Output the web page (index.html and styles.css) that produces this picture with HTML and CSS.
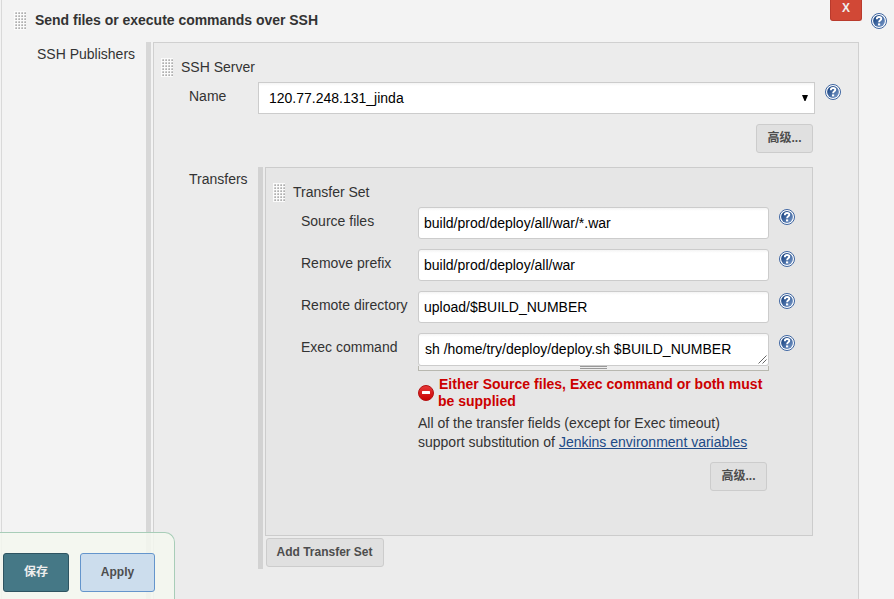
FILE: index.html
```
<!DOCTYPE html>
<html lang="zh-CN">
<head>
<meta charset="utf-8">
<title>SSH Publishers</title>
<link rel="stylesheet" href="styles.css">
</head>
<body>
<svg class="defs" width="0" height="0" aria-hidden="true">
  <defs>
    <linearGradient id="blue" x1="0" y1="0" x2="1" y2="1"><stop offset=".2" stop-color="#204a87"/><stop offset="1" stop-color="#7f9fce"/></linearGradient>
    <linearGradient id="red" x1="0" y1="0" x2="0" y2="1"><stop offset="0" stop-color="#e83a3a"/><stop offset="1" stop-color="#c80000"/></linearGradient>
    <pattern id="dots" width="3" height="3" patternUnits="userSpaceOnUse" x="0" y="1"><rect width="3" height="3" fill="#fbfbfb"/><rect x="1" width="1" height="1" fill="#d6d6d6"/><rect x="2" width="1" height="1" fill="#c4c4c4"/><rect x="1" y="1" width="1" height="1" fill="#c4c4c4"/><rect x="2" y="1" width="1" height="1" fill="#b0b0b0"/></pattern>
    <symbol id="grip" viewBox="0 0 12 19"><rect width="12" height="19" fill="url(#dots)"/></symbol>
    <symbol id="help" viewBox="0 0 16 16">
      <circle cx="8" cy="8" r="7.5" fill="#fff" stroke="#3c64a0"/>
      <circle cx="8" cy="8" r="5.9" fill="url(#blue)"/>
      <path d="M5.8 6.2C5.8 4.6 6.8 4 8.1 4c1.4 0 2.2.7 2.2 1.8 0 1.6-2.2 1.5-2.2 3.5" fill="none" stroke="#fff" stroke-width="1.9"/>
      <rect x="7" y="10.4" width="2.2" height="2" fill="#fff"/>
    </symbol>
  </defs>
</svg>
<main class="page">
  <header class="heading">
    <svg class="grip"><use href="#grip"/></svg>
    <h1 class="title">Send files or execute commands over SSH</h1>
    <button class="delete">X</button>
    <svg class="help"><use href="#help"/></svg>
  </header>
  <div class="publishers">
    <div class="label outer-label">SSH Publishers</div>
    <section class="server">
      <div class="set-title"><svg class="grip"><use href="#grip"/></svg><span class="server-name">SSH Server</span></div>
      <div class="row name-row">
        <div class="label"><span>Name</span></div>
        <div class="select"><span class="ip">120.77.248.131_jinda</span><svg class="arrow" viewBox="0 0 6 6"><path d="M0 0h6L3.5 6h-1z"/></svg></div>
        <svg class="help"><use href="#help"/></svg>
      </div>
      <div class="actions"><button class="btn advanced">高级...</button></div>
      <div class="row transfers-row">
        <div class="label"><span>Transfers</span></div>
        <div class="transfers">
          <section class="transfer-set">
            <div class="set-title"><svg class="grip"><use href="#grip"/></svg><span class="ts-name">Transfer Set</span></div>
            <div class="field"><div class="label"><span>Source files</span></div><div class="input"><span>build/prod/deploy/all/war/*.war</span></div><svg class="help"><use href="#help"/></svg></div>
            <div class="field"><div class="label"><span>Remove prefix</span></div><div class="input"><span>build/prod/deploy/all/war</span></div><svg class="help"><use href="#help"/></svg></div>
            <div class="field"><div class="label"><span>Remote directory</span></div><div class="input"><span>upload/$BUILD_NUMBER</span></div><svg class="help"><use href="#help"/></svg></div>
            <div class="field command"><div class="label"><span>Exec command</span></div>
              <div class="command-box">
                <div class="input area"><span>sh /home/try/deploy/deploy.sh $BUILD_NUMBER</span><svg class="resizer" viewBox="0 0 9 9"><path d="M.5 8.5l8-8M4.5 8.5l4-4" stroke="#666" fill="none"/></svg></div>
                <div class="handle"><i></i></div>
              </div><svg class="help"><use href="#help"/></svg></div>
            <div class="notes">
              <div class="error"><svg class="error-icon" viewBox="0 0 16 16"><circle cx="8" cy="8" r="7.5" fill="url(#red)" stroke="#b41212"/><rect x="4" y="6" width="8" height="3" rx=".5" fill="#fff"/></svg><strong>Either Source files, Exec command or both must<br>be supplied</strong></div>
              <p class="hint">All of the transfer fields (except for Exec timeout)<br>support substitution of <a href="#">Jenkins environment variables</a></p>
              <button class="btn advanced">高级...</button>
            </div>
          </section>
          <button class="btn add">Add Transfer Set</button>
        </div>
      </div>
    </section>
  </div>
  <footer class="bottom-bar"><button class="save">保存</button><button class="apply">Apply</button></footer>
</main>
</body>
</html>
```
FILE: styles.css
```
* { box-sizing: border-box; }
body { margin: 0; font: 14px/18px "Liberation Sans", "Noto Sans CJK SC", sans-serif; color: #333; background: #f3f3f3; }
svg { display: block; flex: none; }
button { font: bold 12px/16px "Liberation Sans", "Noto Sans CJK SC", sans-serif; margin: 0; padding: 0; }
.defs { position: absolute; }
.page { width: 894px; height: 599px; overflow: hidden; background: linear-gradient(#d9d9d9, #d9d9d9) 1px 0 / 1px 100% no-repeat #f3f3f3; }
.heading { display: flex; align-items: flex-start; height: 42px; padding-left: 14px; }
.heading .grip { margin-top: 11px; }
.grip { width: 12px; height: 19px; }
.title { margin: 11px 0 0 9px; font-size: 14px; line-height: 18px; width: 795px; white-space: nowrap; letter-spacing: -.025px; }
.delete { width: 32px; height: 21px; flex: none; padding-bottom: 4px; border: 1px solid #b93a2c; border-top: 0; border-radius: 0 0 3px 3px; background: #d14836; color: #eee; }
.help { width: 16px; height: 16px; }
.heading .help { margin: 13px 0 0 9px; }
.publishers { display: flex; height: 557px; }
.outer-label { width: 146px; padding: 3px 0 0 37px; white-space: nowrap; }
.server { width: 713px; border-left: 5px solid #d7d7d7; padding-left: 2px; background: linear-gradient(#ececec, #ececec) 2px 0 no-repeat; position: relative; }
.server::before { content: ""; position: absolute; inset: 0 0 0 2px; border: 1px solid #d0d0d0; border-bottom: 0; pointer-events: none; }
.set-title { display: flex; gap: 8px; padding: 16px 0 0 8px; height: 40px; }
.set-title span { line-height: 18px; }
.name-row { display: flex; height: 42px; }
.label { flex: none; }
.row > .label { width: 105px; padding: 3px 0 0 36px; }
.name-row > .label { padding-top: 5px; }
.select { display: flex; align-items: center; justify-content: space-between; width: 557px; height: 32px; border: 1px solid #ccc; background: linear-gradient(#f4f4f4, #fff 3px); color: #000; padding: 0 6px 0 10px; }
.arrow { width: 6px; height: 6px; }
.name-row .help { margin: 2px 0 0 10px; }
.btn { display: block; height: 29px; border: 1px solid #ccc; border-radius: 3px; background: #e0e0e0; color: #4d4d4d; padding-bottom: 2px; }
.actions { height: 43px; }
.advanced { width: 57px; }
.actions .advanced { margin-left: 603px; }
.transfers-row { display: flex; }
.transfers { height: 402px; border-left: 5px solid #d2d2d2; padding-left: 2px; }
.transfer-set { width: 548px; height: 369px; border: 1px solid #ccc; background: #e6e6e6; }
.transfer-set .set-title { padding: 15px 0 0 7px; height: 39px; }
.field { display: flex; height: 42px; }
.field > .label { width: 152px; padding: 5px 0 0 35px; white-space: nowrap; }
.input { display: flex; align-items: center; width: 351px; height: 32px; border: 1px solid #ccc; border-radius: 3px; background: linear-gradient(#f4f4f4, #fff 3px); color: #000; padding-left: 5px; white-space: nowrap; }
.field .help { margin: 2px 0 0 10px; }
.area { position: relative; height: 33px; padding: 0 0 2px 6px; }
.resizer { position: absolute; right: 1px; bottom: 1px; width: 9px; height: 9px; }
.handle { width: 351px; height: 5px; border: 1px solid #b8b8b0; border-top: 0; background: #eee; }
.handle i { display: block; width: 27px; height: 3px; margin-left: 161px; border: 1px solid #999; border-width: 1px 0; }
.notes { padding: 1px 0 0 152px; }
.error { display: flex; gap: 4px; color: #c00; line-height: 17px; white-space: nowrap; }
.error strong::first-line { letter-spacing: .01px; }
.error strong { text-indent: 1px; }
.error-icon { width: 16px; height: 16px; margin-top: 9px; }
.hint { margin: 4px 0 10px; line-height: 19px; white-space: nowrap; }
.hint a { color: #204a87; }
.notes .advanced { margin-left: 292px; }
.add { width: 118px; margin: 2px 0 0 1px; padding-right: 1px; }
.bottom-bar { position: fixed; left: 0; bottom: 0; display: flex; gap: 11px; width: 175px; height: 67px; padding: 20px 0 0 3px; border: 1px solid #a8cdb8; border-width: 1px 1px 0 0; border-radius: 0 10px 0 0; background: rgba(244, 248, 239, .84); }
.save, .apply { height: 39px; border-radius: 3px; padding-bottom: 2px; }
.save { width: 66px; border: 1px solid #2e5461; background: #457886; color: #eee; }
.apply { width: 75px; border: 1px solid #6495cc; background: #ccdded; color: #4d4d4d; }
```
